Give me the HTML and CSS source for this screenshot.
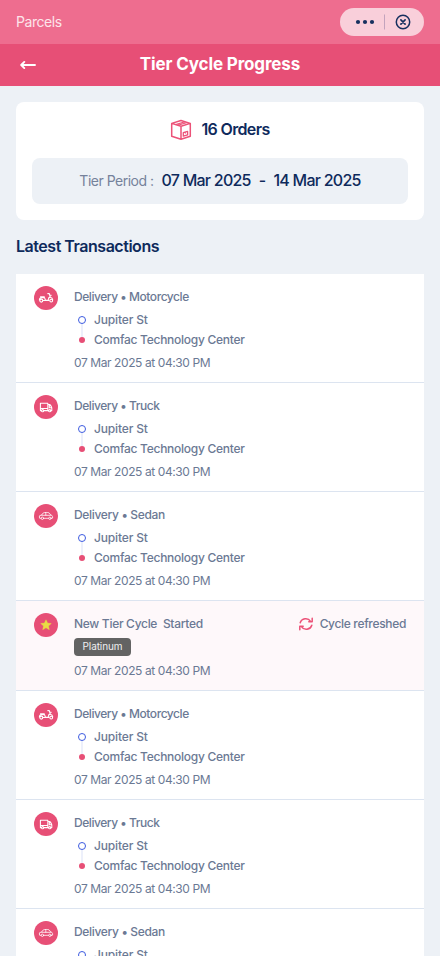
FILE: index.html
```html
<!DOCTYPE html>
<html lang="en">
<head>
<meta charset="utf-8">
<meta name="viewport" content="width=device-width, initial-scale=1">
<title>Tier Cycle Progress</title>
<link rel="stylesheet" href="styles.css">
</head>
<body>
<svg width="0" height="0" class="sprite" aria-hidden="true">
  <symbol id="moto" viewBox="0 0 24 24">
    <g fill="none" stroke="#fff" stroke-width="1.100" stroke-linecap="round" stroke-linejoin="round">
      <circle cx="7.300" cy="14.600" r="1.500"/><circle cx="17.200" cy="14.600" r="1.400"/>
      <path d="M5.400 14c0-1.600 1.200-2.400 2.800-2.400h2.300l1 2.600h2.700c0-2 .9-3 2-3.300l-.9-3.300h-1.500M9 14.500h6M6.500 10.700h3.800M15.800 9.200h1.400M16.200 11.200c1.500.3 2.400 1.300 2.500 2.500"/>
    </g>
  </symbol>
  <symbol id="truck" viewBox="0 0 24 24">
    <g fill="none" stroke="#fff" stroke-width="1.050" stroke-linecap="round" stroke-linejoin="round">
      <path d="M7.300 15.600H6.400V8.200h7.400v7.400h-4M13.800 9.500h2c1 .9 1.700 2 2 3.400v2.700h-.9M14.600 15.600h-.8M6.400 13.400h7.400M15.300 9.700v3.100h2.300"/>
      <circle cx="8.600" cy="15.700" r="1.100"/><circle cx="15.700" cy="15.700" r="1.100"/>
    </g>
  </symbol>
  <symbol id="car" viewBox="0 0 24 24">
    <g fill="none" stroke="#fff" stroke-width=".8" stroke-linecap="round" stroke-linejoin="round">
      <path d="M7 14.300H5.700c-.5-.8-.5-1.800-.1-2.600l2-.7 1.700-2.100c1.800-.6 4.200-.6 5.800 0l1.600 2c1.100.2 1.700.8 1.900 1.700v1.500l-1.200.2M9.800 14.300h4.700M7.600 11.300h9M11.800 8.600v2.600"/>
      <circle cx="8.400" cy="14.300" r="1.200"/><circle cx="15.900" cy="14.300" r="1.200"/>
    </g>
  </symbol>
  <symbol id="star" viewBox="0 0 24 24">
    <path fill="#e9dc44" stroke="#e9dc44" stroke-width=".4" stroke-linejoin="round" d="M12 6.700l1.600 3.400 3.700.4-2.800 2.500.8 3.700-3.300-1.900-3.300 1.900.8-3.700-2.800-2.500 3.700-.4z"/>
  </symbol>
</svg>

<header class="appbar">
  <span class="app-name">Parcels</span>
  <div class="capsule">
    <svg width="84" height="28" viewBox="0 0 84 28">
      <g fill="#17305f"><circle cx="18" cy="14" r="2.100"/><circle cx="25" cy="14" r="2.100"/><circle cx="32" cy="14" r="2.100"/></g>
      <path d="M44.500 6.500v15" stroke="#c3a3bd" stroke-width="1"/>
      <g fill="none" stroke="#17305f" stroke-width="1.500" stroke-linecap="round"><circle cx="63" cy="14" r="6.700"/><path d="M60.900 11.900l4.200 4.200M65.100 11.900l-4.200 4.200" stroke-width="1.700"/></g>
    </svg>
  </div>
</header>
<div class="titlebar">
  <svg class="back" width="16" height="10" viewBox="0 0 16 10"><path d="M15 5H1.500M4.300 1.900L1.200 5l3.100 3.100" fill="none" stroke="#fff" stroke-width="1.900" stroke-linecap="round" stroke-linejoin="round"/></svg>
  <h1>Tier Cycle Progress</h1>
</div>

<main>
  <section class="summary">
    <div class="orders">
      <svg width="22" height="22" viewBox="0 0 22 22"><g fill="none" stroke="#ec5278" stroke-width="1.500" stroke-linejoin="round"><path d="M1.700 4.400L11 1.500l9.300 2.900v12.800L11 20.300l-9.300-3.100zM1.700 4.400L11 7.300l9.300-2.900M11 7.300v13"/><path d="M5.700 5.600l9.300-2.800M8 6.300l9.200-2.800" stroke-width="1.100"/><path d="M13.300 13.700l4.300-1.300v3.500l-4.300 1.300zM15.400 13.200v1.400" stroke-width="1.300"/></g></svg>
      <span>16 Orders</span>
    </div>
    <div class="period">
      <span class="period-label">Tier Period :</span>
      <span class="period-from">07 Mar 2025</span>
      <span class="period-dash">-</span>
      <span class="period-to">14 Mar 2025</span>
    </div>
  </section>

  <h2>Latest Transactions</h2>

  <ul class="list">
    <li class="item">
      <svg class="avatar"><use href="#moto"/></svg>
      <div class="body">
        <div class="name">Delivery • Motorcycle</div>
        <div class="route"><div class="stop from">Jupiter St</div><div class="stop to">Comfac Technology Center</div></div>
        <time>07 Mar 2025 at 04:30 PM</time>
      </div>
    </li>
    <li class="item">
      <svg class="avatar"><use href="#truck"/></svg>
      <div class="body">
        <div class="name">Delivery • Truck</div>
        <div class="route"><div class="stop from">Jupiter St</div><div class="stop to">Comfac Technology Center</div></div>
        <time>07 Mar 2025 at 04:30 PM</time>
      </div>
    </li>
    <li class="item">
      <svg class="avatar"><use href="#car"/></svg>
      <div class="body">
        <div class="name sedan">Delivery • Sedan</div>
        <div class="route"><div class="stop from">Jupiter St</div><div class="stop to">Comfac Technology Center</div></div>
        <time>07 Mar 2025 at 04:30 PM</time>
      </div>
    </li>
    <li class="item cycle">
      <svg class="avatar"><use href="#star"/></svg>
      <div class="body">
        <div class="name started">New Tier Cycle&nbsp; Started</div>
        <div class="tier">Platinum</div>
        <time>07 Mar 2025 at 04:30 PM</time>
      </div>
      <div class="refreshed">
        <svg width="14" height="14" viewBox="0 0 14 14"><g fill="none" stroke="#ec5278" stroke-width="1.500" stroke-linecap="round" stroke-linejoin="round"><path d="M1.200 5.800A5.800 5.800 0 0 1 11.600 4.300M13.200 1.300v3.400H9.800M12.800 8.200A5.800 5.800 0 0 1 2.400 9.700M.8 12.700V9.300h3.400"/></g></svg>
        <span>Cycle refreshed</span>
      </div>
    </li>
    <li class="item">
      <svg class="avatar"><use href="#moto"/></svg>
      <div class="body">
        <div class="name">Delivery • Motorcycle</div>
        <div class="route"><div class="stop from">Jupiter St</div><div class="stop to">Comfac Technology Center</div></div>
        <time>07 Mar 2025 at 04:30 PM</time>
      </div>
    </li>
    <li class="item">
      <svg class="avatar"><use href="#truck"/></svg>
      <div class="body">
        <div class="name">Delivery • Truck</div>
        <div class="route"><div class="stop from">Jupiter St</div><div class="stop to">Comfac Technology Center</div></div>
        <time>07 Mar 2025 at 04:30 PM</time>
      </div>
    </li>
    <li class="item">
      <svg class="avatar"><use href="#car"/></svg>
      <div class="body">
        <div class="name sedan">Delivery • Sedan</div>
        <div class="route"><div class="stop from">Jupiter St</div><div class="stop to">Comfac Technology Center</div></div>
        <time>07 Mar 2025 at 04:30 PM</time>
      </div>
    </li>
  </ul>
</main>
</body>
</html>
```
FILE: styles.css
```css
*, *::before, *::after { box-sizing: border-box; }
html, body { height: 956px; overflow: hidden; }
body {
  margin: 0;
  background: #edf1f6;
  color: #0e2a5c;
  font-family: Inter, "Liberation Sans", sans-serif;
  white-space: nowrap;
}
.sprite { position: absolute; }
svg { display: block; flex: none; }
h1, h2, ul { margin: 0; padding: 0; }

.appbar {
  height: 44px;
  padding: 0 16px;
  display: flex;
  align-items: center;
  justify-content: space-between;
  background: #ee6d8f;
}
.app-name { color: #fde4ea; font-size: 14px; line-height: 20px; letter-spacing: -.45px; }
.capsule { border-radius: 14px; background: #f9cfda; }

.titlebar {
  height: 42px;
  padding: 0 20px;
  display: grid;
  grid-template-columns: 16px 1fr 16px;
  align-items: center;
  background: #e74f76;
}
h1 { padding-bottom: 2px; color: #fff; text-align: center; font-size: 17px; line-height: 24px; font-weight: 700; letter-spacing: -.13px; }

main { padding: 16px; }
.summary { height: 118px; padding: 16px; border-radius: 8px; background: #fff; }
.orders {
  height: 24px;
  display: flex;
  align-items: center;
  justify-content: center;
  gap: 9px;
  font-size: 16px;
  line-height: 22px;
  font-weight: 600;
  letter-spacing: -.65px;
}
.orders span { padding-bottom: 2px; }
.period {
  height: 46px;
  margin-top: 16px;
  padding-bottom: 2px;
  display: flex;
  align-items: center;
  justify-content: center;
  border-radius: 8px;
  background: #edf1f6;
  font-size: 16px;
  font-weight: 500;
  letter-spacing: -.75px;
}
.period-label { margin-right: 8px; color: #75829b; font-size: 14px; font-weight: 400; letter-spacing: -.5px; }
.period-dash { margin: 0 8px; }

h2 { margin-top: 15px; font-size: 16px; line-height: 22px; font-weight: 600; letter-spacing: -.47px; }

.list { margin-top: 17px; list-style: none; }
.item {
  display: flex;
  align-items: flex-start;
  padding: 15px 18px 11px;
  border-bottom: 1px solid #dce4f0;
  background: #fff;
  color: #6b7994;
  font-size: 12px;
  line-height: 16px;
  font-weight: 500;
}
.cycle { background: #fef8fa; }
.avatar { width: 24px; height: 24px; margin: -3px 16px 0 0; border-radius: 50%; background: #e74f76; }
.body { flex: 1; }
.name { letter-spacing: -.45px; }
.name.sedan { letter-spacing: -.33px; }
.name.started { letter-spacing: -.3px; }
.route { margin: 7px 0; padding-left: 4px; display: grid; gap: 4px; }
.stop { display: flex; align-items: center; gap: 8px; letter-spacing: -.27px; }
.stop::before { content: ""; width: 8px; height: 8px; border-radius: 50%; }
.from { position: relative; letter-spacing: -.15px; }
.from::before { border: 1.5px solid #3d5be0; }
.from::after { content: ""; position: absolute; left: 3px; top: 12px; width: 2px; height: 13px; background: #edf0fb; }
.to::before { width: 6px; height: 6px; margin: 0 1px; background: #e74f76; }
time { display: block; font-weight: 400; letter-spacing: -.41px; }
.tier {
  width: 57px;
  height: 18px;
  margin: 6px 0 7px;
  border-radius: 4px;
  background: #636363;
  color: #f0f0f0;
  font-size: 10px;
  line-height: 17px;
  font-weight: 400;
  letter-spacing: -.1px;
  text-align: center;
}
.refreshed { display: flex; align-items: center; gap: 7px; letter-spacing: -.33px; }
```
